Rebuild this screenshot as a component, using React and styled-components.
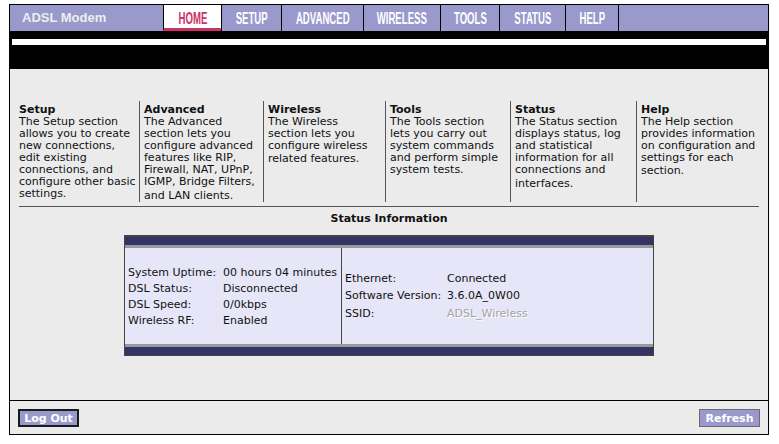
import styled, { createGlobalStyle } from 'styled-components';

const GlobalStyle = createGlobalStyle`
    html, body {
        margin: 0;
        padding: 0;
        background: #ffffff;
    }
    body {
        font-family: 'DejaVu Sans', Verdana, sans-serif;
        font-size: 11px;
        color: #111;
    }
`;

const Frame = styled.div`
    margin: 4px 0 0 9px;
    width: 760px;
    border: 1px solid #000;
    box-sizing: border-box;
    display: flex;
    flex-direction: column;
`;

const Header = styled.div`
    display: flex;
    height: 26px;
    background: #9999cc;
`;

const Brand = styled.div`
    width: 153px;
    padding-left: 12px;
    box-sizing: border-box;
    display: flex;
    align-items: center;
    font-family: 'Liberation Sans', Arial, sans-serif;
    font-weight: bold;
    font-size: 13px;
    color: #eeeeee;
    padding-bottom: 1px;
`;

const Tab = styled.div`
    width: ${(p) => p.$w}px;
    box-sizing: border-box;
    border-left: 1px solid #000;
    display: flex;
    align-items: center;
    justify-content: center;
    background: ${(p) => (p.$active ? '#ffffff' : 'transparent')};
    border-bottom: ${(p) => (p.$active ? '3px solid #cc3366' : 'none')};
    padding-top: ${(p) => (p.$active ? '4px' : '2px')};
    span {
        display: inline-block;
        font-family: 'Liberation Sans', Arial, sans-serif;
        font-weight: bold;
        font-size: 16px;
        color: ${(p) => (p.$active ? '#cc3366' : '#ffffff')};
        transform: scaleX(0.6);
        white-space: nowrap;
    }
`;

const Filler = styled.div`
    flex: 1;
    border-left: 1px solid #000;
`;

const Band = styled.div`
    background: #000;
    padding: 8px 2px 24px;
`;

const Stripe = styled.div`
    height: 6px;
    background: #ffffff;
`;

const Content = styled.div`
    height: 331px;
    box-sizing: border-box;
    background: #ebebeb;
    padding-top: 32px;
    display: flex;
    flex-direction: column;
    align-items: center;
`;

const Sections = styled.div`
    display: grid;
    grid-template-columns: 120px 124px 122px 125px 126px 123px;
    width: 740px;
    height: 100px;
`;

const Section = styled.div`
    border-left: ${(p) => (p.$first ? 'none' : '1px solid #555')};
    padding: 3px 0 0 ${(p) => (p.$first ? '0' : '4px')};
    line-height: 12px;
    h4 {
        margin: 0;
        font-size: 11px;
        font-weight: bold;
        line-height: 12px;
    }
`;

const Line = styled.span`
    display: block;
    white-space: nowrap;
    margin-top: ${(p) => p.$drop || 0}px;
`;

const Rule = styled.div`
    width: 740px;
    height: 1px;
    background: #555;
    margin-top: 5px;
`;

const Title = styled.div`
    margin-top: 5px;
    font-weight: bold;
    line-height: 14px;
`;

const StatusBox = styled.div`
    margin-top: 9px;
    width: 530px;
    border: 1px solid #444;
    border-top-width: 2px;
    box-sizing: border-box;
    background: #e6e6f8;
`;

const Bar = styled.div`
    height: 8px;
    background: #333366;
    ${(p) => (p.$bottom ? 'border-top: 3px solid #999;' : 'border-bottom: 3px solid #999;')}
`;

const StatusBody = styled.div`
    display: grid;
    grid-template-columns: 216px 1fr;
    height: 96px;
`;

const Cell = styled.div`
    display: flex;
    flex-direction: column;
    justify-content: center;
    padding-left: ${(p) => p.$pad}px;
    border-left: ${(p) => (p.$divider ? '1px solid #444' : 'none')};
`;

const Row = styled.div`
    display: grid;
    grid-template-columns: ${(p) => p.$label}px auto;
    height: ${(p) => p.$h}px;
    align-items: center;
    white-space: nowrap;
`;

const Muted = styled.span`
    color: #a4a4a4;
    text-shadow: 1px 1px 0 #fff;
`;

const Footer = styled.div`
    border-top: 1px solid #000;
    background: #ebebeb;
    height: 34px;
    box-sizing: border-box;
    padding: 8px 8px 0;
    display: flex;
    justify-content: space-between;
    align-items: flex-start;
`;

const Button = styled.button`
    height: 18px;
    width: 61px;
    padding: 0;
    background: #9999cc;
    color: #fff;
    font-family: 'DejaVu Sans', Verdana, sans-serif;
    font-weight: bold;
    font-size: 11px;
    border: ${(p) => (p.$focused ? '2px solid #1a1a1a' : '1px solid #6a6a6a')};
    box-sizing: border-box;
    cursor: pointer;
`;

const tabs = [
    { label: 'HOME', w: 58, active: true },
    { label: 'SETUP', w: 60 },
    { label: 'ADVANCED', w: 82 },
    { label: 'WIRELESS', w: 77 },
    { label: 'TOOLS', w: 59 },
    { label: 'STATUS', w: 66 },
    { label: 'HELP', w: 53 },
];

const sections = [
    {
        title: 'Setup',
        lines: ['The Setup section', 'allows you to create', 'new connections,', 'edit existing', 'connections, and', 'configure other basic', 'settings.'],
    },
    {
        title: 'Advanced',
        lines: ['The Advanced', 'section lets you', 'configure advanced', 'features like RIP,', 'Firewall, NAT, UPnP,', 'IGMP, Bridge Filters,', 'and LAN clients.'],
        drop: 2,
    },
    {
        title: 'Wireless',
        lines: ['The Wireless', 'section lets you', 'configure wireless', 'related features.'],
        drop: 1,
    },
    {
        title: 'Tools',
        lines: ['The Tools section', 'lets you carry out', 'system commands', 'and perform simple', 'system tests.'],
    },
    {
        title: 'Status',
        lines: ['The Status section', 'displays status, log', 'and statistical', 'information for all', 'connections and', 'interfaces.'],
        drop: 2,
    },
    {
        title: 'Help',
        lines: ['The Help section', 'provides information', 'on configuration and', 'settings for each', 'section.'],
        drop: 1,
    },
];

const leftRows = [
    ['System Uptime:', '00 hours 04 minutes'],
    ['DSL Status:', 'Disconnected'],
    ['DSL Speed:', '0/0kbps'],
    ['Wireless RF:', 'Enabled'],
];

export default function App() {
    return (
        <>
            <GlobalStyle />
            <Frame>
                <Header>
                    <Brand>ADSL Modem</Brand>
                    {tabs.map((t) => (
                        <Tab key={t.label} $w={t.w} $active={t.active}>
                            <span>{t.label}</span>
                        </Tab>
                    ))}
                    <Filler />
                </Header>
                <Band>
                    <Stripe />
                </Band>
                <Content>
                    <Sections>
                        {sections.map((s, i) => (
                            <Section key={s.title} $first={i === 0}>
                                <h4>{s.title}</h4>
                                {s.lines.map((l, j) => (
                                    <Line key={l} $drop={j === s.lines.length - 1 ? s.drop : 0}>
                                        {l}
                                    </Line>
                                ))}
                            </Section>
                        ))}
                    </Sections>
                    <Rule />
                    <Title>Status Information</Title>
                    <StatusBox>
                        <Bar />
                        <StatusBody>
                            <Cell $pad={3}>
                                {leftRows.map(([k, v]) => (
                                    <Row key={k} $label={95} $h={16}>
                                        <span>{k}</span>
                                        <span>{v}</span>
                                    </Row>
                                ))}
                            </Cell>
                            <Cell $pad={3} $divider>
                                <Row $label={102} $h={17}>
                                    <span>Ethernet:</span>
                                    <span>Connected</span>
                                </Row>
                                <Row $label={102} $h={17}>
                                    <span>Software Version:</span>
                                    <span>3.6.0A_0W00</span>
                                </Row>
                                <Row $label={102} $h={19}>
                                    <span>SSID:</span>
                                    <Muted>ADSL_Wireless</Muted>
                                </Row>
                            </Cell>
                        </StatusBody>
                        <Bar $bottom />
                    </StatusBox>
                </Content>
                <Footer>
                    <Button $focused>Log Out</Button>
                    <Button>Refresh</Button>
                </Footer>
            </Frame>
        </>
    );
}
